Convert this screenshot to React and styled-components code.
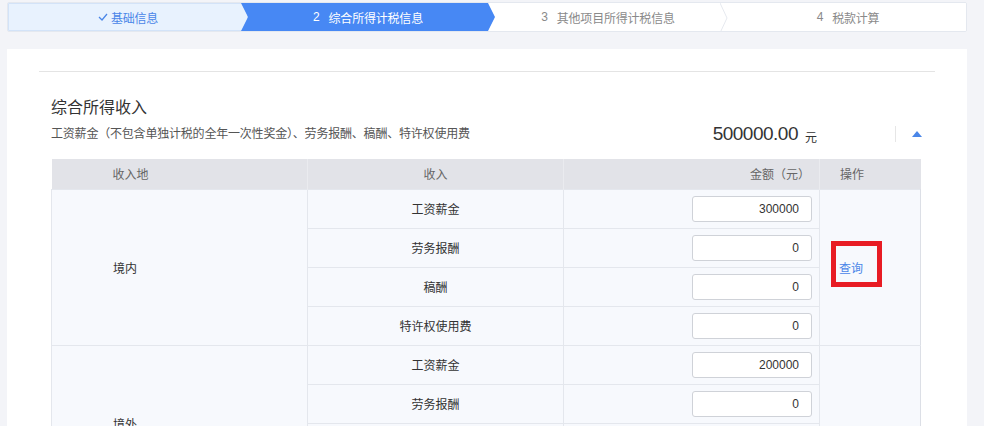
import React from 'react';
import styled, { createGlobalStyle } from 'styled-components';

const GlobalStyle = createGlobalStyle`
	html, body {
		margin: 0;
		padding: 0;
		background: #f3f4f8;
		font-family: "Liberation Sans", "Noto Sans CJK SC", sans-serif;
		color: #333;
	}
	* {
		box-sizing: border-box;
	}
`;

const DivPage = styled.div`
	padding: 2px 17px 0 7px;
	height: 426px;
	overflow: hidden;
`;

const DivStepBar = styled.div`
	display: flex;
	height: 30px;
	border: 1px solid #e4e8ef;
	border-radius: 2px;
	background: #fff;
	overflow: hidden;
`;

const DivStep = styled.div`
	position: relative;
	flex: 0 0 ${(p) => (p.$active ? '254px' : '240px')};
	margin: ${(p) => (p.$active ? '0 -7px' : '0')};
	display: flex;
	align-items: center;
	justify-content: center;
	font-size: 12px;
	letter-spacing: -0.2px;
	z-index: ${(p) => (p.$active ? 1 : 0)};
	color: ${(p) => (p.$done ? '#4a86e8' : p.$active ? '#fff' : '#8a8a8a')};
	background: ${(p) => (p.$done ? '#e8f2fe' : p.$active ? '#4788f4' : '#fff')};
	border: ${(p) => (p.$done ? '1px solid #d3e3f8' : 'none')};
	clip-path: ${(p) =>
		p.$active
			? 'polygon(0 0, calc(100% - 7px) 0, 100% 50%, calc(100% - 7px) 100%, 0 100%, 7px 50%)'
			: 'none'};
`;

const SpanStepNo = styled.span`
	margin-right: 9px;
`;

const SvgChevron = styled.svg`
	position: absolute;
	right: 0;
	top: 0;
`;

const DivCard = styled.div`
	margin-top: 17px;
	background: #fff;
	padding: 22px 32px 0 32px;
	height: 400px;
`;

const HrLine = styled.div`
	height: 1px;
	background: #e4e4e4;
`;

const SectionIncome = styled.section`
	padding: 0 15px 0 12px;
`;

const H3Title = styled.h3`
	margin: 25px 0 0 0;
	font-size: 16px;
	font-weight: normal;
	line-height: 22px;
	color: #333;
`;

const DivSummary = styled.div`
	display: flex;
	justify-content: space-between;
	align-items: flex-start;
	height: 40px;
`;

const PDesc = styled.p`
	margin: 7px 0 0 0;
	font-size: 12px;
	line-height: 16px;
	letter-spacing: -0.2px;
	color: #555;
`;

const DivTotal = styled.div`
	display: flex;
	align-items: center;
	margin-top: 3px;
	margin-right: -2px;
`;

const SpanAmount = styled.span`
	font-size: 19px;
	letter-spacing: -0.5px;
	line-height: 24px;
	color: #333;
`;

const SpanUnit = styled.span`
	font-size: 12px;
	margin: 4px 0 0 7px;
	color: #333;
`;

const DivDivider = styled.div`
	width: 1px;
	height: 16px;
	margin-left: 78px;
	background: #e6e6e6;
`;

const SvgToggle = styled.svg`
	margin-left: 16px;
	display: block;
`;

const TableIncome = styled.table`
	width: 869px;
	table-layout: fixed;
	border-collapse: collapse;
	font-size: 12px;
`;

const Th = styled.th`
	height: 30px;
	padding: 0 ${(p) => (p.$align === 'right' ? '9px' : '0')} 0
		${(p) => (p.$pad ? `${p.$pad}px` : '0')};
	background: #e2e3e8;
	color: #666;
	font-weight: normal;
	text-align: ${(p) => p.$align || 'center'};
	border-left: 1px solid #eaebef;
	&:first-child {
		border-left: none;
	}
`;

const Td = styled.td`
	height: 39px;
	padding: 0 ${(p) => (p.$align === 'right' ? '7px' : '0')} 0
		${(p) => (p.$pad ? `${p.$pad}px` : '0')};
	background: #f7f9fd;
	color: #333;
	text-align: ${(p) => p.$align || 'center'};
	border: 1px solid #e4e7ed;
	&:last-child {
		border-right-color: #dcdfe6;
	}
`;

const InputAmount = styled.input`
	width: 120px;
	height: 26px;
	border: 1px solid #cfd2d8;
	border-radius: 3px;
	background: #fff;
	padding: 0 12px;
	text-align: right;
	font-family: "Liberation Sans", sans-serif;
	font-size: 12px;
	color: #333;
	vertical-align: middle;
`;

const SpanQuery = styled.span`
	position: relative;
	color: #4a86e8;
	cursor: pointer;
`;

const SpanMark = styled.span`
	position: absolute;
	left: -8px;
	top: -21px;
	width: 51px;
	height: 46px;
	border: 5px solid #e81c24;
`;

const steps = [
	{ no: '', label: '基础信息', done: true },
	{ no: '2', label: '综合所得计税信息', active: true },
	{ no: '3', label: '其他项目所得计税信息', sep: true },
	{ no: '4', label: '税款计算' }
];

const groups = [
	{
		place: '境内',
		query: true,
		rows: [
			{ name: '工资薪金', value: '300000' },
			{ name: '劳务报酬', value: '0' },
			{ name: '稿酬', value: '0' },
			{ name: '特许权使用费', value: '0' }
		]
	},
	{
		place: '境外',
		rows: [
			{ name: '工资薪金', value: '200000' },
			{ name: '劳务报酬', value: '0' },
			{ name: '稿酬', value: '0' },
			{ name: '特许权使用费', value: '0' }
		]
	}
];

const CheckIcon = () => (
	<svg width="10" height="8" viewBox="0 0 10 8" style={{ marginRight: 3 }}>
		<polyline points="1,4 4,7 9,1" fill="none" stroke="#4a86e8" strokeWidth="1.3" />
	</svg>
);

const App = () => (
	<DivPage>
		<GlobalStyle />
		<DivStepBar>
			{steps.map((s) => (
				<DivStep key={s.label} $active={s.active} $done={s.done}>
					{s.done ? <CheckIcon /> : <SpanStepNo>{s.no}</SpanStepNo>}
					{s.label}
					{s.sep && (
						<SvgChevron width="8" height="30" viewBox="0 0 8 30">
							<polyline points="0,0 7,15 0,30" fill="none" stroke="#e6e9ef" strokeWidth="1" />
						</SvgChevron>
					)}
				</DivStep>
			))}
		</DivStepBar>
		<DivCard>
			<HrLine />
			<SectionIncome>
				<H3Title>综合所得收入</H3Title>
				<DivSummary>
					<PDesc>工资薪金（不包含单独计税的全年一次性奖金）、劳务报酬、稿酬、特许权使用费</PDesc>
					<DivTotal>
						<SpanAmount>500000.00</SpanAmount>
						<SpanUnit>元</SpanUnit>
						<DivDivider />
						<SvgToggle width="10" height="6" viewBox="0 0 10 6">
							<polygon points="0,6 5,0 10,6" fill="#4a86e8" />
						</SvgToggle>
					</DivTotal>
				</DivSummary>
				<TableIncome>
					<colgroup>
						<col style={{ width: 256 }} />
						<col style={{ width: 256 }} />
						<col style={{ width: 256 }} />
						<col style={{ width: 101 }} />
					</colgroup>
					<thead>
						<tr>
							<Th $align="left" $pad={61}>收入地</Th>
							<Th>收入</Th>
							<Th $align="right">金额（元）</Th>
							<Th $align="left" $pad={20}>操作</Th>
						</tr>
					</thead>
					<tbody>
						{groups.map((g) =>
							g.rows.map((r, i) => (
								<tr key={g.place + r.name}>
									{i === 0 && (
										<Td rowSpan={g.rows.length} $align="left" $pad={61}>
											{g.place}
										</Td>
									)}
									<Td>{r.name}</Td>
									<Td $align="right">
										<InputAmount defaultValue={r.value} />
									</Td>
									{i === 0 && (
										<Td rowSpan={g.rows.length} $align="left" $pad={19}>
											{g.query && (
												<SpanQuery>
													查询
													<SpanMark />
												</SpanQuery>
											)}
										</Td>
									)}
								</tr>
							))
						)}
					</tbody>
				</TableIncome>
			</SectionIncome>
		</DivCard>
	</DivPage>
);

export default App;
